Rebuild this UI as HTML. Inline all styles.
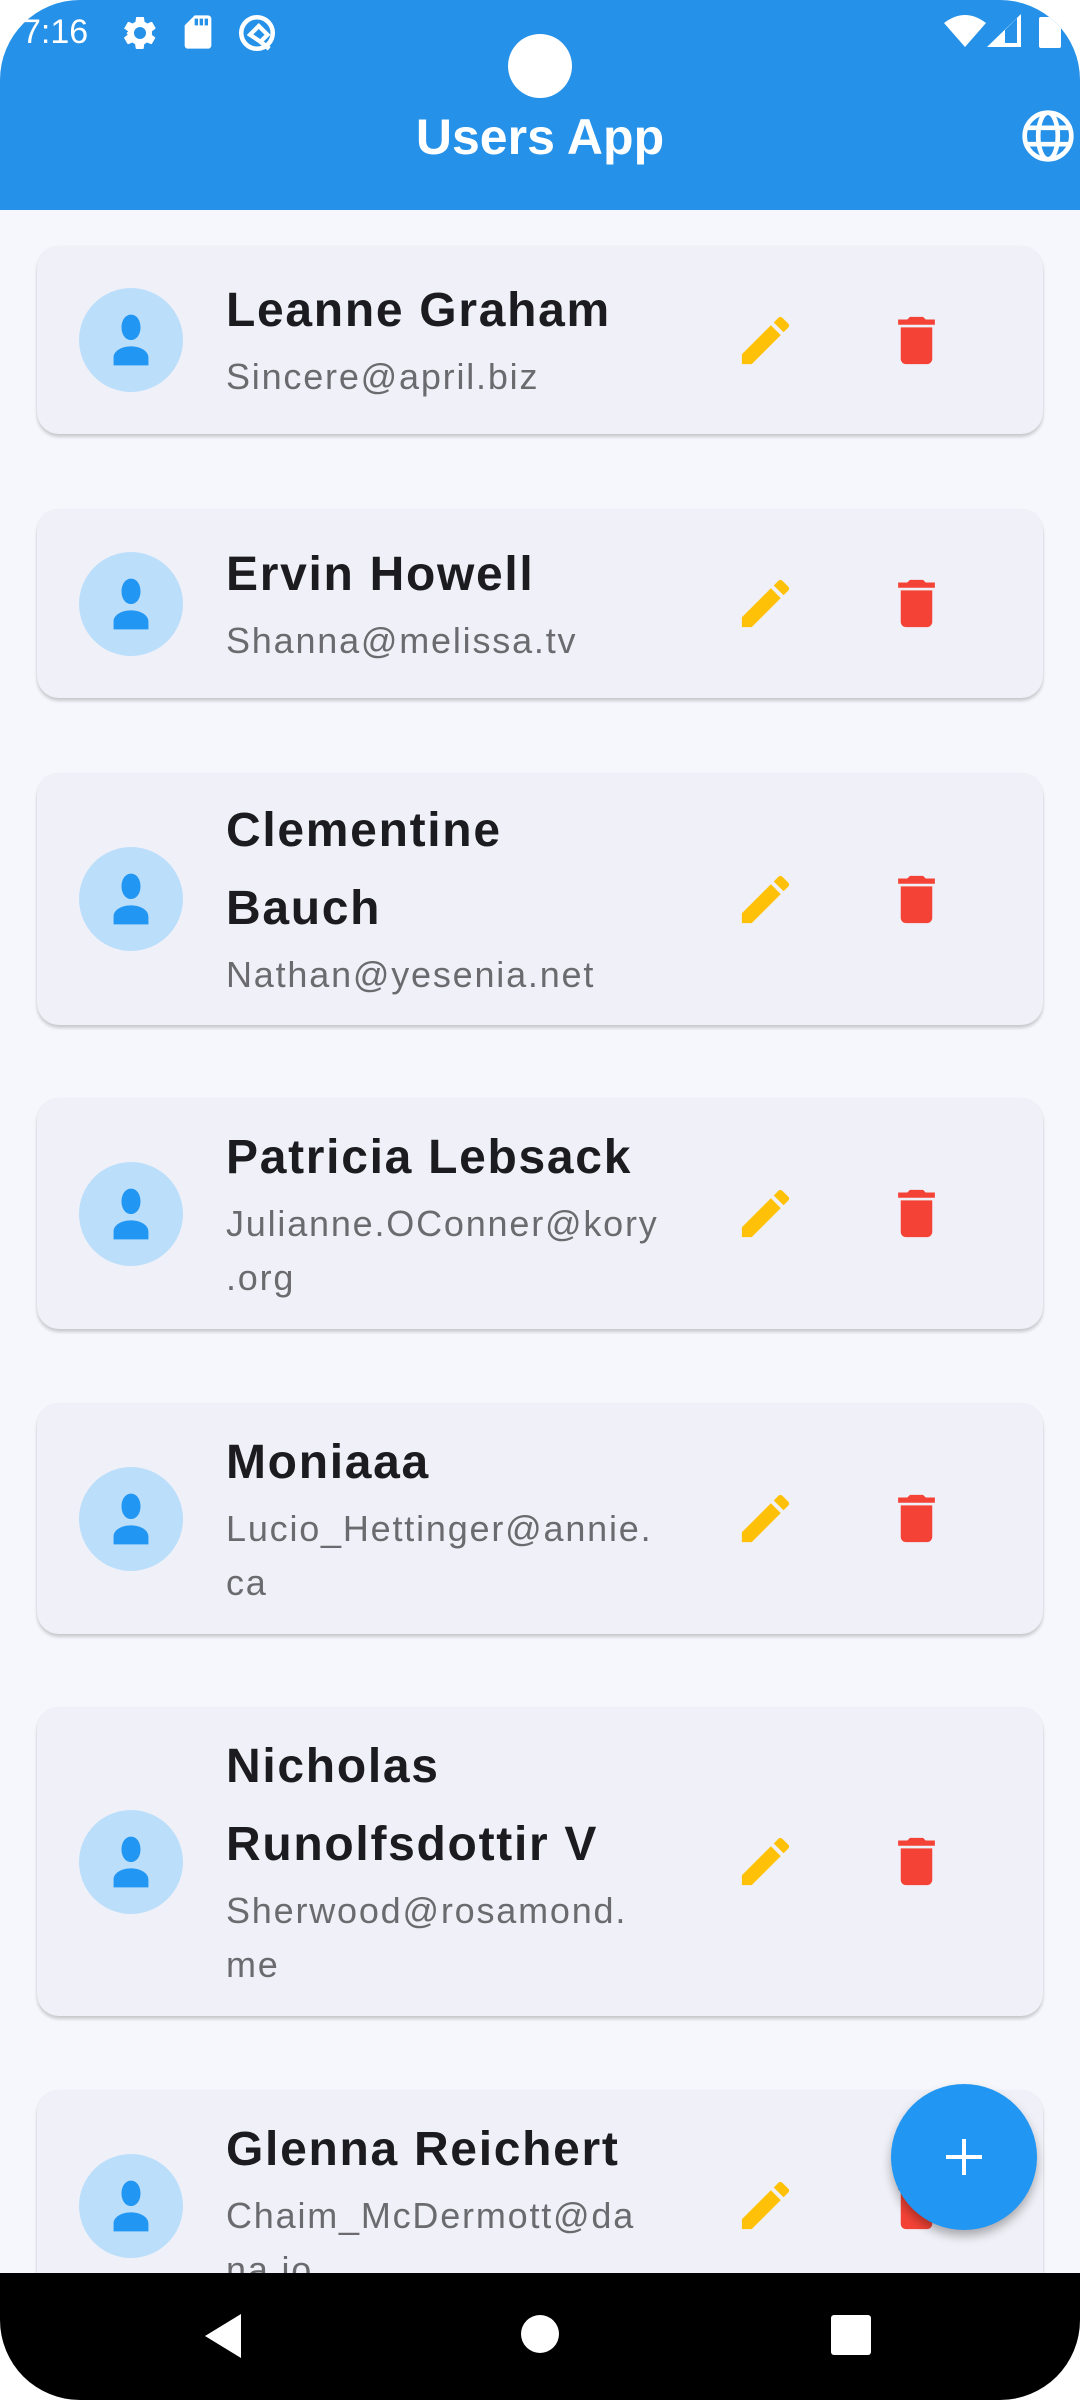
<!DOCTYPE html>
<html><head><meta charset="utf-8"><style>
*{margin:0;padding:0;box-sizing:border-box}
body{width:1080px;height:2400px;background:#fff;overflow:hidden;font-family:"Liberation Sans",sans-serif;position:relative}
.screen{position:absolute;left:0;top:0;width:1080px;height:2400px;background:#f6f7fc;border-radius:80px;overflow:hidden}
.bar{position:absolute;left:0;top:0;width:1080px;height:210px;background:#2591e8}
.card{position:absolute;left:37px;width:1006px;background:#f0f1f8;border-radius:22px;box-shadow:0 3px 3px rgba(0,0,0,.18),0 0 1px rgba(0,0,0,.08);display:flex;align-items:center}
.av{position:absolute;left:42px;width:104px;height:104px;border-radius:50%;background:#bbdefb;display:flex;align-items:center;justify-content:center}
.txt{position:absolute;left:189px;white-space:nowrap;margin-top:-4px}
.n{font-weight:bold;font-size:48px;line-height:78px;color:#1c1c20;letter-spacing:1.7px}
.e{font-size:36px;line-height:54px;color:#6b6b6f;letter-spacing:1.8px}
.ed{position:absolute;left:697px}
.dl{position:absolute;left:848px}
</style></head><body>
<div class="screen">
<div class="bar"></div>
<div style="position:absolute;left:22px;top:11px;color:#fff;font-size:34px;line-height:42px">7:16</div>
<svg style="position:absolute;left:120px;top:13px" width="40" height="40" viewBox="0 0 24 24"><path fill="#fff" d="M19.14 12.94c.04-.3.06-.61.06-.94 0-.32-.02-.64-.07-.94l2.030-1.58a.49.49 0 00.12-.61l-1.92-3.32a.49.49 0 00-.59-.22l-2.39.96c-.5-.38-1.03-.7-1.62-.94l-.36-2.54a.48.48 0 00-.48-.41h-3.84c-.24 0-.43.17-.47.41l-.36 2.54c-.59.24-1.13.57-1.62.94l-2.39-.96a.48.48 0 00-.59.22L2.74 8.87c-.12.21-.8.47.12.61l2.03 1.58c-.05.3-.9.63-.9.94s.2.64.7.94l-2.03 1.58a.49.49 0 00-.12.61l1.92 3.32c.12.22.37.29.59.22l2.39-.96c.5.38 1.03.7 1.62.94l.36 2.54c.5.24.24.41.48.41h3.84c.24 0 .44-.17.47-.41l.36-2.54c.59-.24 1.13-.56 1.62-.94l2.39.96c.22.08.47 0 .59-.22l1.92-3.32c.12-.22.07-.47-.12-.61l-2.01-1.58zM12 15.6A3.6 3.6 0 1112 8.4a3.6 3.6 0 010 7.2z"/></svg>
<svg style="position:absolute;left:178px;top:12px" width="40" height="40" viewBox="0 0 24 24"><path fill="#fff" d="M18 2h-8L4 8v12c0 1.1.9 2 2 2h12c1.1 0 2-.9 2-2V4c0-1.1-.9-2-2-2zm-6 6h-2V4h2v4zm3 0h-2V4h2v4zm3 0h-2V4h2v4z"/></svg>
<svg style="position:absolute;left:236px;top:12px" width="42" height="42" viewBox="0 0 24 24"><circle cx="12" cy="12" r="9" fill="none" stroke="#fff" stroke-width="2.6"/><path d="M8 13l5-5 5 5-4 4z" fill="none" stroke="#fff" stroke-width="2.4"/><path d="M14 17l5 4" stroke="#fff" stroke-width="2.6"/></svg>
<svg style="position:absolute;left:944px;top:13px" width="42" height="34" viewBox="0 0 42 34"><path fill="#fff" d="M0 10Q21-6 42 10L21 34z"/></svg>
<svg style="position:absolute;left:987px;top:14px" width="34" height="34" viewBox="0 0 34 34"><path fill="#fff" d="M34 0V33H0z"/><path fill="#2591e8" d="M18 16L30 4V29H18z"/></svg>
<div style="position:absolute;left:1039px;top:17px;width:22px;height:31px;background:#fff;border-radius:2px"></div>
<div style="position:absolute;left:508px;top:34px;width:64px;height:64px;border-radius:50%;background:#fff"></div>
<div style="position:absolute;left:0;width:1080px;top:104px;text-align:center;color:#fff;font-weight:bold;font-size:50px;line-height:66px">Users App</div>
<svg style="position:absolute;left:1020px;top:108px" width="56" height="56" viewBox="0 0 24 24"><circle cx="12" cy="12" r="10" fill="none" stroke="#fff" stroke-width="2"/><ellipse cx="12" cy="12" rx="4.2" ry="10" fill="none" stroke="#fff" stroke-width="2"/><path d="M2 8.5h20M2 15.5h20" stroke="#fff" stroke-width="2"/></svg>

<div class="card" style="top:246px;height:188px"><div class="av"><svg width="76" height="76" viewBox="0 0 24 24"><path fill="#2196f3" d="M12 12c1.8 0 3-1.8 3-4s-1.2-4-3-4-3 1.8-3 4 1.2 4 3 4zm0 2c-3 0-5.5 1.5-5.5 3.5V20h11v-2.5c0-2-2.5-3.5-5.5-3.5z"/></svg></div>
<div class="txt"><div class="n">Leanne Graham</div><div class="e">Sincere@april.biz</div></div>
<svg class="ed" width="63" height="63" viewBox="0 0 24 24"><path fill="#ffc107" d="M3 17.25V21h3.75L17.81 9.94l-3.75-3.75L3 17.25zM20.71 7.04a1 1 0 000-1.41l-2.34-2.34a1 1 0 00-1.41 0l-1.83 1.83 3.75 3.75 1.83-1.83z"/></svg>
<svg class="dl" width="63" height="63" viewBox="0 0 24 24"><path fill="#f44336" d="M6 19c0 1.1.9 2 2 2h8c1.1 0 2-.9 2-2V7H6v12zM19 4h-3.5l-1-1h-5l-1 1H5v2h14V4z"/></svg></div>

<div class="card" style="top:509px;height:189px"><div class="av"><svg width="76" height="76" viewBox="0 0 24 24"><path fill="#2196f3" d="M12 12c1.8 0 3-1.8 3-4s-1.2-4-3-4-3 1.8-3 4 1.2 4 3 4zm0 2c-3 0-5.5 1.5-5.5 3.5V20h11v-2.5c0-2-2.5-3.5-5.5-3.5z"/></svg></div>
<div class="txt"><div class="n">Ervin Howell</div><div class="e">Shanna@melissa.tv</div></div>
<svg class="ed" width="63" height="63" viewBox="0 0 24 24"><path fill="#ffc107" d="M3 17.25V21h3.75L17.81 9.94l-3.75-3.75L3 17.25zM20.71 7.04a1 1 0 000-1.41l-2.34-2.34a1 1 0 00-1.41 0l-1.83 1.83 3.75 3.75 1.83-1.83z"/></svg>
<svg class="dl" width="63" height="63" viewBox="0 0 24 24"><path fill="#f44336" d="M6 19c0 1.1.9 2 2 2h8c1.1 0 2-.9 2-2V7H6v12zM19 4h-3.5l-1-1h-5l-1 1H5v2h14V4z"/></svg></div>

<div class="card" style="top:773px;height:252px"><div class="av"><svg width="76" height="76" viewBox="0 0 24 24"><path fill="#2196f3" d="M12 12c1.8 0 3-1.8 3-4s-1.2-4-3-4-3 1.8-3 4 1.2 4 3 4zm0 2c-3 0-5.5 1.5-5.5 3.5V20h11v-2.5c0-2-2.5-3.5-5.5-3.5z"/></svg></div>
<div class="txt"><div class="n">Clementine<br>Bauch</div><div class="e">Nathan@yesenia.net</div></div>
<svg class="ed" width="63" height="63" viewBox="0 0 24 24"><path fill="#ffc107" d="M3 17.25V21h3.75L17.81 9.94l-3.75-3.75L3 17.25zM20.71 7.04a1 1 0 000-1.41l-2.34-2.34a1 1 0 00-1.41 0l-1.83 1.83 3.75 3.75 1.83-1.83z"/></svg>
<svg class="dl" width="63" height="63" viewBox="0 0 24 24"><path fill="#f44336" d="M6 19c0 1.1.9 2 2 2h8c1.1 0 2-.9 2-2V7H6v12zM19 4h-3.5l-1-1h-5l-1 1H5v2h14V4z"/></svg></div>

<div class="card" style="top:1098px;height:231px"><div class="av"><svg width="76" height="76" viewBox="0 0 24 24"><path fill="#2196f3" d="M12 12c1.8 0 3-1.8 3-4s-1.2-4-3-4-3 1.8-3 4 1.2 4 3 4zm0 2c-3 0-5.5 1.5-5.5 3.5V20h11v-2.5c0-2-2.5-3.5-5.5-3.5z"/></svg></div>
<div class="txt"><div class="n">Patricia Lebsack</div><div class="e">Julianne.OConner@kory<br>.org</div></div>
<svg class="ed" width="63" height="63" viewBox="0 0 24 24"><path fill="#ffc107" d="M3 17.25V21h3.75L17.81 9.94l-3.75-3.75L3 17.25zM20.71 7.04a1 1 0 000-1.41l-2.34-2.34a1 1 0 00-1.41 0l-1.83 1.83 3.75 3.75 1.83-1.83z"/></svg>
<svg class="dl" width="63" height="63" viewBox="0 0 24 24"><path fill="#f44336" d="M6 19c0 1.1.9 2 2 2h8c1.1 0 2-.9 2-2V7H6v12zM19 4h-3.5l-1-1h-5l-1 1H5v2h14V4z"/></svg></div>

<div class="card" style="top:1403px;height:231px"><div class="av"><svg width="76" height="76" viewBox="0 0 24 24"><path fill="#2196f3" d="M12 12c1.8 0 3-1.8 3-4s-1.2-4-3-4-3 1.8-3 4 1.2 4 3 4zm0 2c-3 0-5.5 1.5-5.5 3.5V20h11v-2.5c0-2-2.5-3.5-5.5-3.5z"/></svg></div>
<div class="txt"><div class="n">Moniaaa</div><div class="e">Lucio_Hettinger@annie.<br>ca</div></div>
<svg class="ed" width="63" height="63" viewBox="0 0 24 24"><path fill="#ffc107" d="M3 17.25V21h3.75L17.81 9.94l-3.75-3.75L3 17.25zM20.71 7.04a1 1 0 000-1.41l-2.34-2.34a1 1 0 00-1.41 0l-1.83 1.83 3.75 3.75 1.83-1.83z"/></svg>
<svg class="dl" width="63" height="63" viewBox="0 0 24 24"><path fill="#f44336" d="M6 19c0 1.1.9 2 2 2h8c1.1 0 2-.9 2-2V7H6v12zM19 4h-3.5l-1-1h-5l-1 1H5v2h14V4z"/></svg></div>

<div class="card" style="top:1707px;height:309px"><div class="av"><svg width="76" height="76" viewBox="0 0 24 24"><path fill="#2196f3" d="M12 12c1.8 0 3-1.8 3-4s-1.2-4-3-4-3 1.8-3 4 1.2 4 3 4zm0 2c-3 0-5.5 1.5-5.5 3.5V20h11v-2.5c0-2-2.5-3.5-5.5-3.5z"/></svg></div>
<div class="txt"><div class="n">Nicholas<br>Runolfsdottir V</div><div class="e">Sherwood@rosamond.<br>me</div></div>
<svg class="ed" width="63" height="63" viewBox="0 0 24 24"><path fill="#ffc107" d="M3 17.25V21h3.75L17.81 9.94l-3.75-3.75L3 17.25zM20.71 7.04a1 1 0 000-1.41l-2.34-2.34a1 1 0 00-1.41 0l-1.83 1.83 3.75 3.75 1.83-1.83z"/></svg>
<svg class="dl" width="63" height="63" viewBox="0 0 24 24"><path fill="#f44336" d="M6 19c0 1.1.9 2 2 2h8c1.1 0 2-.9 2-2V7H6v12zM19 4h-3.5l-1-1h-5l-1 1H5v2h14V4z"/></svg></div>

<div class="card" style="top:2090px;height:231px"><div class="av"><svg width="76" height="76" viewBox="0 0 24 24"><path fill="#2196f3" d="M12 12c1.8 0 3-1.8 3-4s-1.2-4-3-4-3 1.8-3 4 1.2 4 3 4zm0 2c-3 0-5.5 1.5-5.5 3.5V20h11v-2.5c0-2-2.5-3.5-5.5-3.5z"/></svg></div>
<div class="txt"><div class="n">Glenna Reichert</div><div class="e">Chaim_McDermott@da<br>na.io</div></div>
<svg class="ed" width="63" height="63" viewBox="0 0 24 24"><path fill="#ffc107" d="M3 17.25V21h3.75L17.81 9.94l-3.75-3.75L3 17.25zM20.71 7.04a1 1 0 000-1.41l-2.34-2.34a1 1 0 00-1.41 0l-1.83 1.83 3.75 3.75 1.83-1.83z"/></svg>
<svg class="dl" width="63" height="63" viewBox="0 0 24 24"><path fill="#f44336" d="M6 19c0 1.1.9 2 2 2h8c1.1 0 2-.9 2-2V7H6v12zM19 4h-3.5l-1-1h-5l-1 1H5v2h14V4z"/></svg></div>

<div style="position:absolute;left:891px;top:2084px;width:146px;height:146px;border-radius:50%;background:#2196f3;box-shadow:0 6px 10px rgba(0,0,0,.3);display:flex;align-items:center;justify-content:center"><svg width="40" height="40" viewBox="0 0 40 40"><path d="M20 2v36M2 20h36" stroke="#fff" stroke-width="4"/></svg></div>

<div style="position:absolute;left:0;top:2273px;width:1080px;height:127px;background:#000"></div>
<svg style="position:absolute;left:205px;top:2314px" width="40" height="44" viewBox="0 0 40 44"><path fill="#fff" d="M36 0V44L0 22z"/></svg>
<div style="position:absolute;left:521px;top:2315px;width:38px;height:38px;border-radius:50%;background:#fff"></div>
<div style="position:absolute;left:831px;top:2315px;width:40px;height:40px;border-radius:3px;background:#fff"></div>
</div>
</body></html>
